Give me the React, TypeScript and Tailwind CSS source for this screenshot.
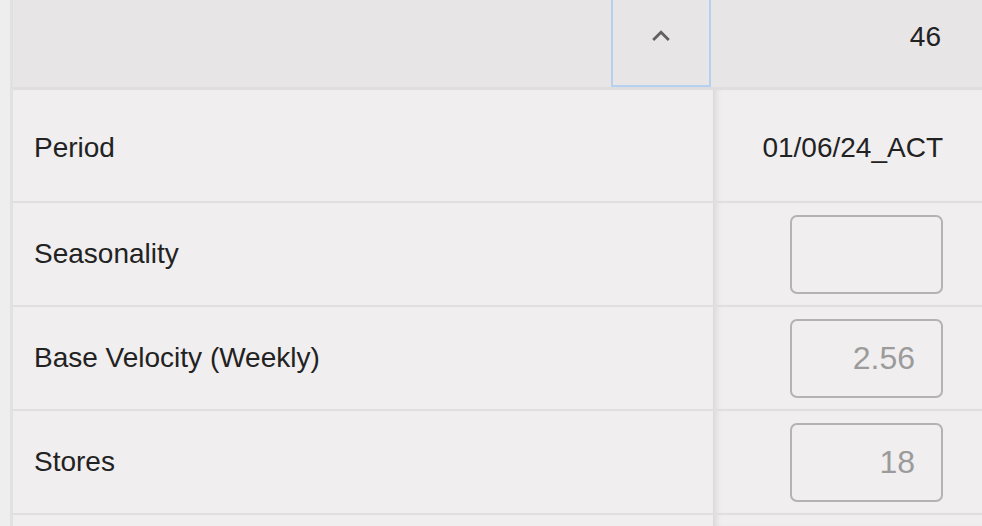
const rows = [
  { label: 'Seasonality', value: '' },
  { label: 'Base Velocity (Weekly)', value: '2.56' },
  { label: 'Stores', value: '18' },
]

function ChevronUp() {
  return (
    <svg width="20" height="14" viewBox="0 0 20 14" fill="none">
      <path d="M2.2 12 L10 4.2 L17.8 12" stroke="#606060" strokeWidth="2.8" />
    </svg>
  )
}

export default function App() {
  return (
    <div
      className="flex h-[526px] w-[982px] overflow-hidden bg-[#efeeef] text-[#222]"
      style={{ fontFamily: '"Liberation Sans", Arial, sans-serif' }}
    >
      <div className="w-[10px] shrink-0 bg-[#efeeef]" />
      <div className="flex flex-1 flex-col border-l-[3px] border-[#e2e1e2]">
        {/* header */}
        <div className="flex h-[87px] shrink-0 bg-[#e7e5e6]">
          <div className="flex-1" />
          <div className="flex w-[100px] items-center justify-center border-x-2 border-b-2 border-[#b5d0f1] pb-[15px]">
            <ChevronUp />
          </div>
          <div className="flex w-[271px] items-center justify-end pr-[41px] pb-[14px] text-[28px]">
            46
          </div>
        </div>
        <div className="h-[3px] shrink-0 bg-[#dfdedf]" />

        {/* rows */}
        <div className="flex flex-1 flex-col overflow-hidden rounded-tl-[5px] bg-[#f0eeef]">
          <div className="flex h-[113px] shrink-0 border-b-2 border-[#e0dfe0]">
            <div className="flex w-[701px] items-center border-r border-[#dcdbdc] pl-[21px] pt-[4px] text-[28px]">
              Period
            </div>
            <div className="flex flex-1 items-center justify-end pr-[39px] pt-[4px] text-[28px] shadow-[inset_6px_0_6px_-4px_rgba(0,0,0,0.10)]">
              01/06/24_ACT
            </div>
          </div>
          {rows.map((row) => (
            <div key={row.label} className="flex h-[104px] shrink-0 border-b-2 border-[#e0dfe0]">
              <div className="flex w-[701px] items-center border-r border-[#dcdbdc] pl-[21px] text-[28px]">
                {row.label}
              </div>
              <div className="flex flex-1 items-center justify-end pr-[39px] shadow-[inset_6px_0_6px_-4px_rgba(0,0,0,0.10)]">
                <div className="flex h-[79px] w-[153px] items-center justify-end rounded-[7px] border-2 border-[#b4b3b4] pr-[26px] text-[32px] text-[#9b9b9b]">
                  {row.value}
                </div>
              </div>
            </div>
          ))}
          <div className="flex flex-1">
            <div className="w-[701px] border-r border-[#dcdbdc]" />
            <div className="flex-1 shadow-[inset_6px_0_6px_-4px_rgba(0,0,0,0.10)]" />
          </div>
        </div>
      </div>
    </div>
  )
}
